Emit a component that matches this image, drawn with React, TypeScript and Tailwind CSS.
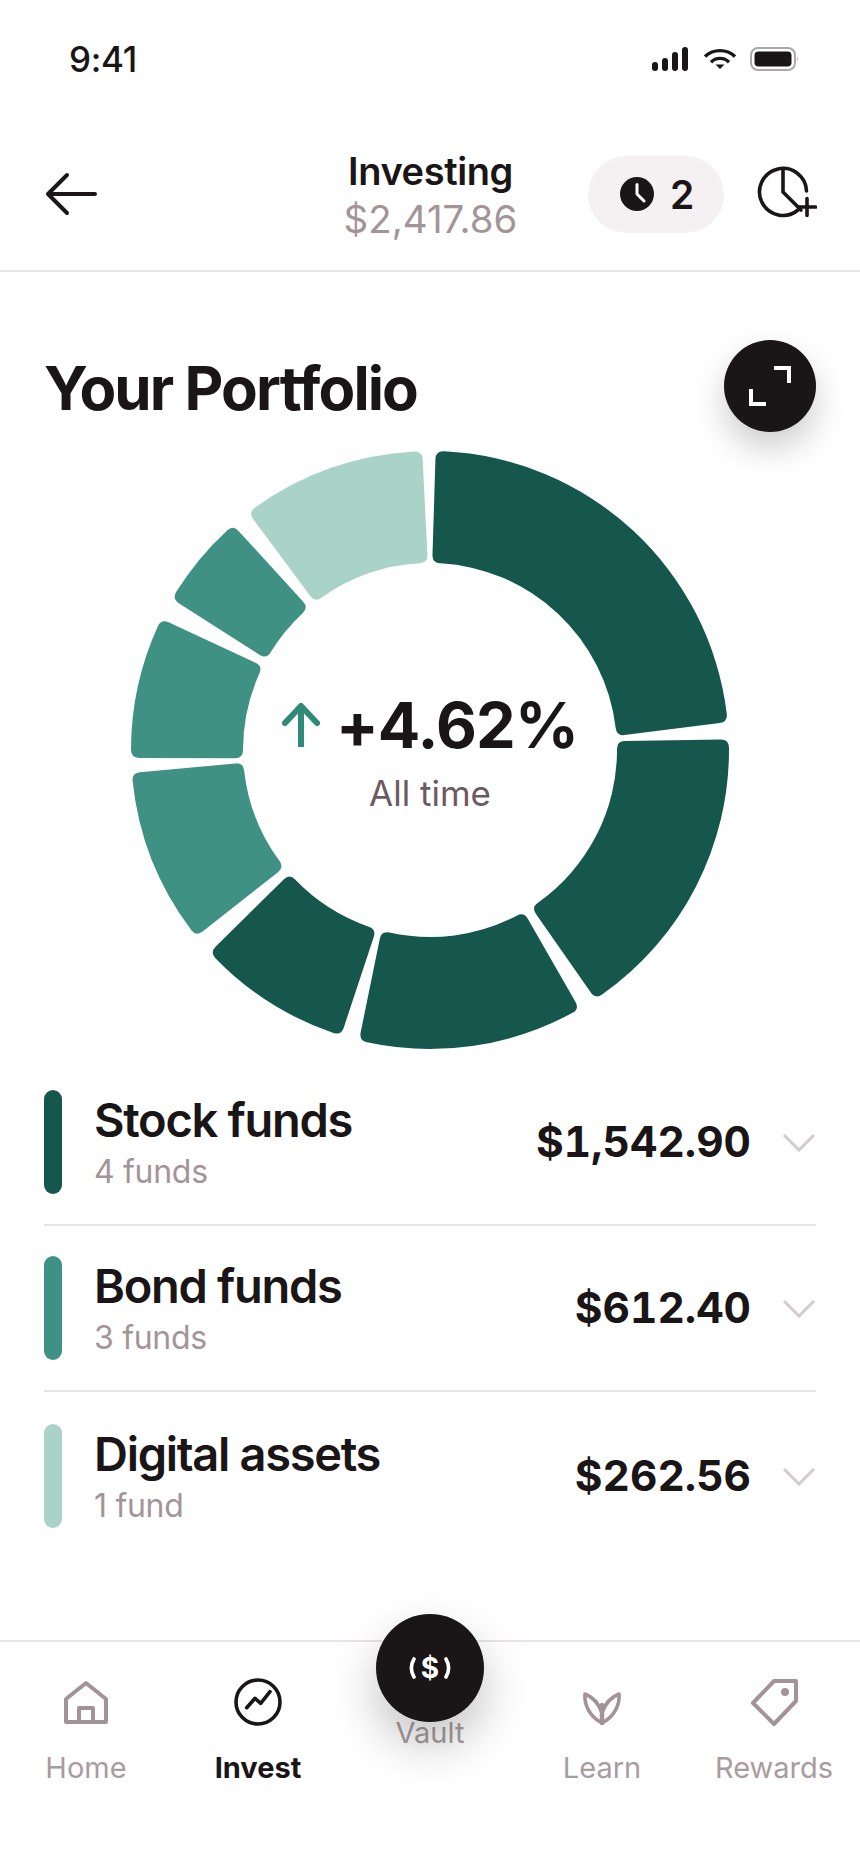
const DARK = '#16574d';
const MID = '#3f9183';
const LIGHT = '#aad3c8';

// angles in degrees clockwise from 12 o'clock: outer start/end, inner start/end
const segments = [
  { o0: 1.1, o1: 84.6, i0: 0.7, i1: 85.7, color: DARK },
  { o0: 88, o1: 146.4, i0: 87.3, i1: 147.2, color: DARK },
  { o0: 150, o1: 193.7, i0: 149.9, i1: 195, color: DARK },
  { o0: 197.3, o1: 227.4, i0: 196.7, i1: 228.6, color: DARK },
  { o0: 231.4, o1: 265.6, i0: 231.2, i1: 266.1, color: MID },
  { o0: 268.5, o1: 296, i0: 267.5, i1: 296.6, color: MID },
  { o0: 300.4, o1: 318.8, i0: 299.1, i1: 319.5, color: MID },
  { o0: 322.6, o1: 358.5, i0: 322.1, i1: 359.3, color: LIGHT },
];

const pt = (r: number, deg: number) => {
  const a = (deg * Math.PI) / 180;
  return `${(300 + r * Math.sin(a)).toFixed(2)} ${(300 - r * Math.cos(a)).toFixed(2)}`;
};

const segmentPath = (s: (typeof segments)[number]) => {
  const R = 299;
  const r = 187;
  const c = 8;
  const dO = ((c / R) * 180) / Math.PI;
  const dI = ((c / r) * 180) / Math.PI;
  const lerp = (a: number, b: number, t: number) => a + (b - a) * t;
  const t = c / (R - r);
  return [
    `M${pt(R, s.o0 + dO)}`,
    `A${R} ${R} 0 0 1 ${pt(R, s.o1 - dO)}`,
    `Q${pt(R, s.o1)} ${pt(R - c, lerp(s.o1, s.i1, t))}`,
    `L${pt(r + c, lerp(s.i1, s.o1, t))}`,
    `Q${pt(r, s.i1)} ${pt(r, s.i1 - dI)}`,
    `A${r} ${r} 0 0 0 ${pt(r, s.i0 + dI)}`,
    `Q${pt(r, s.i0)} ${pt(r + c, lerp(s.i0, s.o0, t))}`,
    `L${pt(R - c, lerp(s.o0, s.i0, t))}`,
    `Q${pt(R, s.o0)} ${pt(R, s.o0 + dO)}`,
    'Z',
  ].join(' ');
};

const funds = [
  { name: 'Stock funds', sub: '4 funds', value: '$1,542.90', bar: 'bg-[#16574d]', row: 'pb-[30px]' },
  { name: 'Bond funds', sub: '3 funds', value: '$612.40', bar: 'bg-[#3f9183]', row: 'pt-[30px] pb-[30px] border-t-2 border-[#e9e5e7]' },
  { name: 'Digital assets', sub: '1 fund', value: '$262.56', bar: 'bg-[#aad3c8]', row: 'pt-[32px] border-t-2 border-[#e9e5e7]' },
];

const StatusBar = () => (
  <div className="flex h-[120px] items-center justify-between pb-[2px] pl-[69px] pr-[60px]">
    <span className="text-[35px] font-medium leading-none tracking-[-0.3px] text-[#1a1516]">9:41</span>
    <div className="flex items-center">
      <svg width="36" height="24" viewBox="0 0 36 24" fill="#1a1516">
        <rect x="0" y="15" width="6" height="9" rx="3" />
        <rect x="10" y="11" width="6" height="13" rx="3" />
        <rect x="20" y="5" width="6" height="19" rx="3" />
        <rect x="30" y="0" width="6" height="24" rx="3" />
      </svg>
      <svg className="ml-[15px]" width="34" height="22" viewBox="0 0 34 22" fill="none" stroke="#1a1516" strokeWidth="3.4">
        <path d="M2 8.5A22 22 0 0 1 32 8.5" />
        <path d="M8 14.2A12.5 12.5 0 0 1 26 14.2" />
        <path d="M12.5 16.5H21.5L17 21Z" fill="#1a1516" stroke="none" />
      </svg>
      <svg className="ml-[13px]" width="50" height="24" viewBox="0 0 50 24">
        <rect x="1" y="1" width="44" height="22" rx="7" fill="none" stroke="#a9a9a9" strokeWidth="2" />
        <rect x="4.5" y="4.5" width="37" height="15" rx="4" fill="#1a1516" />
        <path d="M47 9.5a3 3 0 0 1 0 5Z" fill="#c4c4c4" />
      </svg>
    </div>
  </div>
);

const Header = () => (
  <div className="grid h-[152px] grid-cols-[1fr_auto_1fr] items-center border-b-2 border-[#e9e5e7] pl-[44px] pr-[43px] pb-[2px]">
    <svg width="54" height="44" viewBox="0 0 54 44" fill="none" stroke="#1a1516" strokeWidth="4" strokeLinecap="round" strokeLinejoin="round">
      <path d="M51 22H4M23 3 4 22l19 19" />
    </svg>
    <div className="flex flex-col items-center pt-[2px]">
      <span className="text-[38px] font-semibold leading-[48px] tracking-[-0.4px] text-[#1a1516]">Investing</span>
      <span className="text-[38.5px] leading-[48px] text-[#a39597]">$2,417.86</span>
    </div>
    <div className="flex items-center justify-end gap-[33px]">
      <div className="flex h-[77px] w-[136px] items-center gap-[16px] rounded-full bg-[#f5f0f1] pl-[32px]">
        <svg width="34" height="34" viewBox="0 0 34 34">
          <circle cx="17" cy="17" r="17" fill="#1a1516" />
          <path d="M17 7.5V17l7 7" fill="none" stroke="#fff" strokeWidth="3" strokeLinecap="round" strokeLinejoin="round" />
        </svg>
        <span className="text-[39px] font-semibold leading-none text-[#1a1516]">2</span>
      </div>
      <svg width="60" height="60" viewBox="0 0 60 60" fill="none" stroke="#1a1516" strokeWidth="3.6" strokeLinecap="round" strokeLinejoin="round">
        <path d="M49.5 27A23.5 23.5 0 1 0 41 46" />
        <path d="M26 4.5V28L44 46" />
        <path d="M41.5 43H58.5M50 34.5V51.5" />
      </svg>
    </div>
  </div>
);

const Donut = () => (
  <div className="relative mx-auto mt-[18px] h-[600px] w-[600px]">
    <svg width="600" height="600" viewBox="0 0 600 600">
      {segments.map((s) => (
        <path key={s.o0} d={segmentPath(s)} fill={s.color} />
      ))}
    </svg>
    <div className="absolute inset-0 flex flex-col items-center justify-center pt-[8px]">
      <div className="flex h-[64px] items-center gap-[16px]">
        <svg width="38" height="44" viewBox="0 0 38 44" fill="none" stroke="#2f8a78" strokeWidth="6" strokeLinejoin="round">
          <path d="M19 5V44" />
          <path d="M3 20 19 3 35 20" strokeLinecap="round" />
        </svg>
        <span className="text-[63px] font-bold leading-none tracking-[-0.8px] text-[#1a1516]">+4.62%</span>
      </div>
      <span className="mt-[14px] text-[35px] leading-[44px] text-[#6b5a60]">All time</span>
    </div>
  </div>
);

const NavItem = ({ label, active, children }: { label: string; active?: boolean; children: React.ReactNode }) => (
  <div className="flex flex-col items-center pt-[36px]">
    <div className="flex h-[48px] items-end">{children}</div>
    <span className={`mt-[24px] text-[29px] leading-[36px] ${active ? 'font-bold text-[#1a1516]' : 'text-[#a89c9f]'}`}>{label}</span>
  </div>
);

const BottomNav = () => (
  <div className="relative mt-[112px] grid grid-cols-5 border-t-2 border-[#e9e5e7]">
    <NavItem label="Home">
      <svg width="48" height="48" viewBox="0 0 48 48" fill="none" stroke="#a39297" strokeWidth="4" strokeLinejoin="round">
        <path d="M24 5 44 21V44H4V21Z" />
        <path d="M17 44V30H31V44" />
      </svg>
    </NavItem>
    <NavItem label="Invest" active>
      <svg width="48" height="48" viewBox="0 0 48 48" fill="none" stroke="#1a1516" strokeWidth="3.6" strokeLinecap="round" strokeLinejoin="round">
        <circle cx="24" cy="24" r="22" />
        <path d="M12.7 29.7 21 20.3 26.7 25.3 36 13.7" />
      </svg>
    </NavItem>
    <div className="flex flex-col items-center pt-[73px]">
      <span className="text-[29px] leading-[36px] text-[#a89c9f]">Vault</span>
    </div>
    <NavItem label="Learn">
      <svg width="40" height="36" viewBox="0 0 40 36" fill="none" stroke="#a39297" strokeWidth="3.6" strokeLinecap="round" strokeLinejoin="round">
        <path d="M20 33C8 27 2 15 3 4C11 7 17 14 20 23" />
        <path d="M20 33C32 27 38 15 37 4C29 7 23 14 20 23" />
        <path d="M20 33V15" strokeWidth="4.5" />
      </svg>
    </NavItem>
    <NavItem label="Rewards">
      <svg width="48" height="48" viewBox="0 0 48 48" fill="none" stroke="#a39297" strokeWidth="4" strokeLinejoin="round">
        <path d="M46 3H24L3 25 24 46 46 23Z" />
        <circle cx="35" cy="14" r="4" fill="#a39297" stroke="none" />
      </svg>
    </NavItem>
    <button className="absolute left-[376px] top-[-28px] flex h-[108px] w-[108px] items-center justify-center gap-[5px] rounded-full bg-[#1a1516] shadow-[0_22px_48px_rgba(0,0,0,0.24)]">
      <svg width="7" height="22" viewBox="0 0 7 22" fill="none" stroke="#fff" strokeWidth="3.6" strokeLinecap="round">
        <path d="M5 2C1.5 8 1.5 14 5 20" />
      </svg>
      <span className="text-[28px] font-bold leading-none text-white">$</span>
      <svg width="7" height="22" viewBox="0 0 7 22" fill="none" stroke="#fff" strokeWidth="3.6" strokeLinecap="round">
        <path d="M2 2C5.5 8 5.5 14 2 20" />
      </svg>
    </button>
  </div>
);

export default function App() {
  return (
    <div className="h-[1864px] w-[860px] overflow-hidden bg-white font-[Inter,sans-serif]">
      <StatusBar />
      <Header />

      <div className="mx-[44px] mt-[68px] flex h-[92px] items-center justify-between">
        <h1 className="pt-[3px] text-[60px] font-bold leading-none tracking-[-1.9px] text-[#1a1516]">Your Portfolio</h1>
        <button className="flex h-[92px] w-[92px] items-center justify-center rounded-full bg-[#1a1516] shadow-[0_16px_34px_rgba(0,0,0,0.2)]">
          <svg width="46" height="46" viewBox="0 0 46 46" fill="none" stroke="#fff" strokeWidth="4">
            <path d="M27 5H42V20" />
            <path d="M4 26V41H19" />
          </svg>
        </button>
      </div>

      <Donut />

      <div className="mx-[44px] mt-[40px]">
        {funds.map((f) => (
          <div key={f.name} className={f.row}>
            <div className="flex h-[104px] items-center">
              <div className={`h-full w-[18px] rounded-full ${f.bar}`} />
              <div className="ml-[32px] flex flex-1 flex-col">
                <span className="text-[47px] font-semibold leading-[53px] tracking-[-1.3px] text-[#1a1516]">{f.name}</span>
                <span className="mt-[6px] text-[32px] leading-[40px] tracking-[-0.3px] text-[#a39597]">{f.sub}</span>
              </div>
              <span className="text-[42.4px] font-bold leading-none tabular-nums text-[#1a1516]">{f.value}</span>
              <svg className="ml-[31px]" width="34" height="19" viewBox="0 0 34 19" fill="none" stroke="#d3cbcf" strokeWidth="3">
                <path d="M2 2 17 17 32 2" />
              </svg>
            </div>
          </div>
        ))}
      </div>

      <BottomNav />
    </div>
  );
}
